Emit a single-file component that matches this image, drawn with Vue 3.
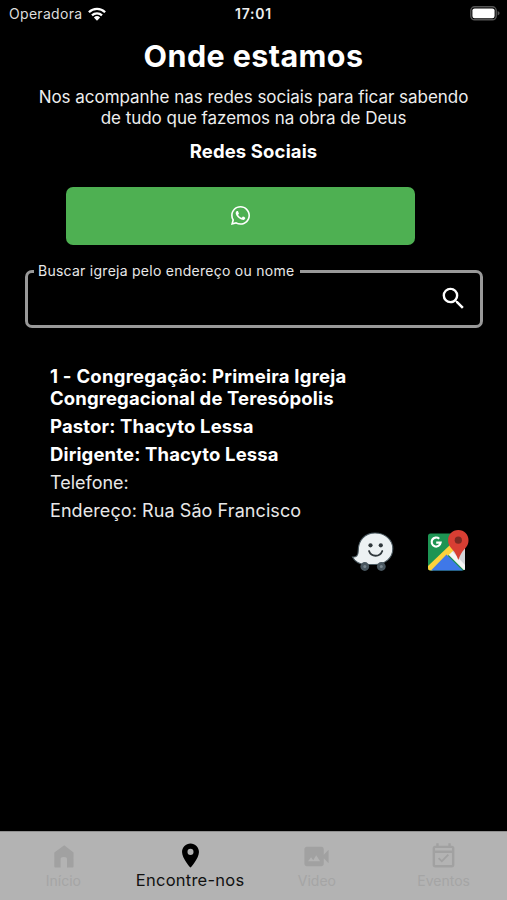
<script setup>
const church = {
  title: ['1 - Congregação: Primeira Igreja', 'Congregacional de Teresópolis'],
  pastor: 'Pastor: Thacyto Lessa',
  leader: 'Dirigente: Thacyto Lessa',
  phone: 'Telefone:',
  address: 'Endereço: Rua São Francisco',
}

const tabs = [
  {
    label: 'Início',
    cls: 'inicio',
    icon: 'M20.300 8.700 12.600 2.700 4.400 8.700V20.300q0 .7.700.7H9.600V14.500q0-2 2.400-2h.5q2.400 0 2.400 2V21h4.700q.7 0 .7-.7z',
  },
  {
    label: 'Encontre-nos',
    cls: 'encontre',
    active: true,
    icon: 'M12 2C8.130 2 5 5.130 5 9c0 5.250 7 13 7 13s7-7.750 7-13c0-3.870-3.130-7-7-7zm0 9.500a2.500 2.500 0 0 1 0-5 2.500 2.500 0 0 1 0 5z',
  },
  {
    label: 'Video',
    cls: 'video',
    icon: 'M18 10.480V6c0-1.100-.9-2-2-2H4c-1.100 0-2 .9-2 2v12c0 1.100.9 2 2 2h12c1.100 0 2-.9 2-2v-4.480l4 3.980v-11l-4 3.980zM5 16l2.500-3.330 1.790 2.400L11.750 11 15 16H5z',
  },
  {
    label: 'Eventos',
    cls: 'eventos',
    icon: 'M16.530 11.060 15.470 10l-4.880 4.880-2.120-2.120-1.060 1.060L10.590 17l5.940-5.940zM19 3h-1V1h-2v2H8V1H6v2H5c-1.110 0-1.990.9-1.990 2L3 19c0 1.100.89 2 2 2h14c1.100 0 2-.9 2-2V5c0-1.100-.9-2-2-2zm0 16H5V9h14v10zM5 7V5h14v2H5z',
  },
]
</script>

<template>
  <div class="screen">
    <header class="status">
      <div class="carrier">
        <span class="carrier-name">Operadora</span>
        <svg class="wifi" viewBox="0 0 18 14">
          <g fill="none" stroke="#fff" stroke-width="2.3">
            <path d="M.9 5.2a11.6 11.6 0 0 1 16.2 0" />
            <path d="M4 8.4a7.2 7.2 0 0 1 10 0" />
          </g>
          <path fill="#fff" d="M5.900 10.500a4.500 4.500 0 0 1 6.200 0L9 13.700z" />
        </svg>
      </div>
      <span class="clock">17:01</span>
      <svg class="battery" viewBox="0 0 31 15">
        <rect x=".8" y=".8" width="25.4" height="13" rx="3.8" fill="none" stroke="#555" stroke-width="1.4" />
        <rect x="2.4" y="2.4" width="22.2" height="9.8" rx="2.2" fill="#fff" />
        <path d="M27.600 5.100c2.600.8 2.600 3.600 0 4.400z" fill="#555" />
      </svg>
    </header>

    <main class="content">
      <h1>Onde estamos</h1>
      <p class="intro">
        <span>Nos acompanhe nas redes sociais para ficar sabendo</span><br />
        <span>de tudo que fazemos na obra de Deus</span>
      </p>
      <h2>Redes Sociais</h2>

      <button class="whatsapp" aria-label="WhatsApp">
        <svg viewBox="0 0 448 448">
          <path
            fill="#fff"
            d="M380.900 65.100C339 23.100 283.200 0 223.900 0c-122.400 0-222 99.600-222 222 0 39.100 10.200 77.300 29.600 111L0 448l117.700-30.900c32.400 17.700 68.900 27 106.100 27h.1c122.300 0 224.100-99.600 224.100-222 0-59.300-25.200-115-67.100-157zm-157 341.600c-33.200 0-65.700-8.900-94-25.700l-6.700-4-69.800 18.300L72 327.200l-4.400-7c-18.500-29.400-28.200-63.300-28.200-98.200 0-101.700 82.800-184.500 184.600-184.500 49.300 0 95.600 19.200 130.400 54.100 34.800 34.900 56.200 81.200 56.100 130.500 0 101.800-84.900 184.600-186.600 184.600zm101.200-138.200c-5.500-2.800-32.800-16.200-37.900-18-5.100-1.900-8.800-2.800-12.500 2.800-3.700 5.600-14.300 18-17.600 21.800-3.200 3.700-6.500 4.200-12 1.400-32.600-16.300-54-29.100-75.500-66-5.700-9.800 5.700-9.100 16.300-30.300 1.800-3.700.9-6.900-.5-9.700-1.400-2.800-12.500-30.100-17.100-41.200-4.500-10.800-9.100-9.300-12.500-9.500-3.200-.2-6.900-.2-10.600-.2-3.700 0-9.700 1.400-14.800 6.900-5.100 5.600-19.400 19-19.400 46.300 0 27.300 19.900 53.700 22.600 57.400 2.800 3.700 39.100 59.700 94.800 83.800 35.200 15.200 49 16.500 66.600 13.900 10.700-1.600 32.800-13.400 37.400-26.400 4.600-13 4.600-24.100 3.200-26.400-1.300-2.500-5-3.900-10.500-6.600z"
          />
        </svg>
      </button>

      <fieldset class="search">
        <legend><span>Buscar igreja pelo endereço ou nome</span></legend>
        <svg viewBox="0 0 24 24">
          <path
            fill="#fff"
            d="M15.500 14h-.79l-.28-.27A6.471 6.471 0 0 0 16 9.500 6.500 6.500 0 1 0 9.500 16c1.610 0 3.090-.59 4.230-1.570l.27.28v.79l5 4.990L20.490 19l-4.990-5zm-6 0C7.010 14 5 11.990 5 9.500S7.010 5 9.500 5 14 7.010 14 9.500 11.990 14 9.500 14z"
          />
        </svg>
      </fieldset>

      <section class="church">
        <h3>
          <span class="title-first">{{ church.title[0] }}</span><br />
          <span class="title-second">{{ church.title[1] }}</span>
        </h3>
        <p class="strong">{{ church.pastor }}</p>
        <p class="strong">{{ church.leader }}</p>
        <p class="phone">{{ church.phone }}</p>
        <p class="address">{{ church.address }}</p>
      </section>

      <div class="maps">
        <svg class="waze" viewBox="0 0 44 42">
          <path
            d="M24 3c10.500 0 17.800 7 17.800 15.800S34.500 34.500 24 34.500H14C7.500 34 3.500 31 1.500 27c4 .3 5.700-1.500 5.700-6C7.200 10 14 3 24 3z"
            fill="#ecf1f3"
            stroke="#4b5a61"
            stroke-width="1.100"
          />
          <g fill="#48565f">
            <circle cx="13.800" cy="36.500" r="4.400" />
            <circle cx="30.300" cy="36.500" r="4.400" />
          </g>
          <g fill="#77858e">
            <circle cx="13.800" cy="36.500" r="1.500" />
            <circle cx="30.300" cy="36.500" r="1.500" />
          </g>
          <circle cx="19.500" cy="15.300" r="2.100" fill="#30383c" />
          <circle cx="29.800" cy="15.300" r="2.100" fill="#30383c" />
          <path d="M18 21c2.200 6.300 11 6.300 13.300 0" fill="none" stroke="#30383c" stroke-width="1.800" stroke-linecap="round" />
        </svg>
        <svg class="gmaps" viewBox="0 0 42 42">
          <defs>
            <clipPath id="map-tile"><rect x="1" y="3.500" width="37" height="37" rx="2.500" /></clipPath>
          </defs>
          <g clip-path="url(#map-tile)">
            <rect x="1" y="3" width="37" height="38" fill="#1d9453" />
            <path d="M38 9 20 23 38 41z" fill="#d3d5d9" />
            <path d="M20 23 38 41v-6L24 20z" fill="#f5f5f5" />
            <path d="M1 36 24 14l3 6L5 41H1z" fill="#fdd23c" />
            <path d="M3.500 41 19.500 24.500 36 41z" fill="#3f78e8" />
          </g>
          <path d="M12.200 8.700A4.500 4.500 0 1 0 13.600 12.700H9.200" fill="none" stroke="#fff" stroke-width="2.200" />
          <path d="M31.300 0C25.300 0 21.100 4.500 21.100 10.200c0 5.500 3.500 8 6.200 11.500 2 3 3 5.400 4 8.300 1-2.900 2-5.300 4-8.300 2.700-3.500 6.200-6 6.200-11.500C41.500 4.500 37.300 0 31.300 0z" fill="#d83e33" />
          <circle cx="31.300" cy="10.200" r="3.600" fill="#7d2922" />
        </svg>
      </div>
    </main>

    <nav class="tabs">
      <div v-for="tab in tabs" :key="tab.cls" class="tab" :class="[tab.cls, { active: tab.active }]">
        <svg viewBox="0 0 24 24"><path :d="tab.icon" fill="currentColor" /></svg>
        <span>{{ tab.label }}</span>
      </div>
    </nav>
  </div>
</template>

<style>
body {
  background: #000;
}
</style>

<style scoped>
.screen {
  box-sizing: border-box;
  width: 507px;
  height: 900px;
  display: flex;
  flex-direction: column;
  overflow: hidden;
  background: #000;
  color: #fff;
  font-family: Inter, sans-serif;
  white-space: nowrap;
}
svg {
  display: block;
  flex: none;
}
h1, h2, h3, p {
  margin: 0;
}
.status {
  display: grid;
  grid-template-columns: 1fr auto 1fr;
  align-items: center;
  height: 27px;
  padding: 0 6px 0 9px;
}
.carrier {
  display: flex;
  align-items: center;
  gap: 6px;
  color: #ddd;
  font-size: 14px;
}
.carrier-name {
  letter-spacing: 0.3px;
}
.wifi {
  width: 18px;
  height: 14px;
}
.clock {
  margin-right: 3px;
  font-size: 14px;
  font-weight: 600;
  letter-spacing: 0.8px;
  color: #eee;
}
.battery {
  width: 31px;
  height: 15px;
  justify-self: end;
}
.content {
  flex: 1;
  display: flex;
  flex-direction: column;
}
h1 {
  margin-top: 11px;
  text-align: center;
  font-size: 30.5px;
  line-height: 36px;
  font-weight: 700;
  letter-spacing: 0.4px;
}
.intro {
  margin-top: 13px;
  text-align: center;
  font-size: 17px;
  line-height: 21px;
  letter-spacing: -0.03px;
  color: #eee;
}
h2 {
  margin-top: 11px;
  text-align: center;
  font-size: 18.5px;
  line-height: 22px;
  font-weight: 700;
  letter-spacing: 0.14px;
}
.whatsapp {
  display: flex;
  align-items: center;
  justify-content: center;
  width: 349.5px;
  height: 58.5px;
  margin: 24.5px 0 0 65.5px;
  padding: 0;
  border: 0;
  border-radius: 7px;
  background: #4eb052;
}
.whatsapp svg {
  width: 19px;
  height: 19px;
}
.search {
  box-sizing: border-box;
  display: flex;
  justify-content: flex-end;
  width: 458px;
  height: 67px;
  margin: 16px 0 0 25px;
  padding: 0 12px 0 6px;
  border: 3px solid #999;
  border-radius: 7px;
}
.search legend {
  padding: 0 6px 0 4px;
  font-size: 14px;
  line-height: 20px;
  letter-spacing: 0.26px;
  color: #e8e8e8;
}
.search svg {
  width: 29px;
  height: 29px;
  margin-top: 3px;
}
.church {
  display: flex;
  flex-direction: column;
  gap: 6px;
  margin: 37px 0 0 50px;
  font-size: 18px;
  line-height: 22px;
}
h3 {
  font-size: 18.5px;
  line-height: 22px;
  font-weight: 700;
}
.title-first {
  letter-spacing: 0.25px;
}
.title-second {
  letter-spacing: 0.13px;
}
.strong {
  font-size: 18.5px;
  font-weight: 700;
  letter-spacing: 0.14px;
}
.phone,
.address {
  color: #e8e8e8;
}
.phone {
  margin-top: 0.5px;
}
.address {
  letter-spacing: 0.08px;
}
.maps {
  display: flex;
  gap: 32px;
  margin: 8px 0 0 351px;
}
.waze {
  width: 44px;
  height: 42px;
}
.gmaps {
  width: 42px;
  height: 42px;
}
.tabs {
  box-sizing: border-box;
  display: grid;
  grid-template-columns: repeat(4, 1fr);
  height: 69px;
  border-top: 1px solid #8f8f8f;
  background: #b3b3b3;
}
.tab {
  display: flex;
  flex-direction: column;
  align-items: center;
  padding-top: 10px;
  color: #a1a1a1;
  font-size: 14px;
  line-height: 20px;
}
.tab svg {
  width: 29px;
  height: 29px;
}
.tab span {
  color: #a5a5a5;
}
.tab.active {
  padding-top: 9px;
  color: #000;
  font-size: 16.5px;
}
.tab.active span {
  color: #111;
  letter-spacing: 0.25px;
}
</style>
